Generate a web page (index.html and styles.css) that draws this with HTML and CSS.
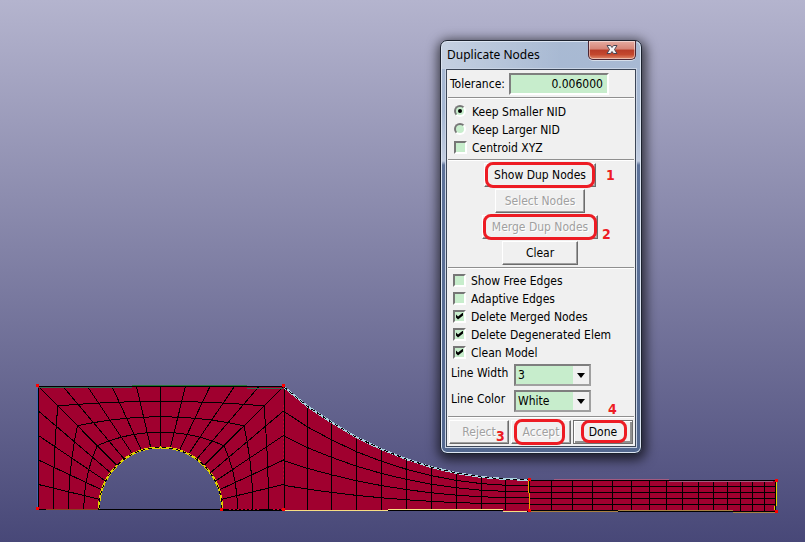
FILE: index.html
```html
<!DOCTYPE html>
<html lang="en">
<head>
<meta charset="utf-8">
<title>Duplicate Nodes</title>
<link rel="stylesheet" href="styles.css">
</head>
<body>
<main class="viewport">
  <svg class="model" width="805" height="542" viewBox="0 0 805 542" aria-hidden="true">
    <path class="solid" d="M38 386H284L307 406L331 422L356 437L381 449L406 459L431 467L456 473L481 477L505 479L529 480H776V511H529L284 510H222V509A61.500 61.500 0 0 0 99 509H38Z"/>
    <path class="mesh" id="mesh"/>
    <path class="edge blue" d="M37.500 389V509M38.500 389V416"/>
    <path class="edge green" d="M39 387.500H132M247 388.500H283"/>
    <path class="edge leaf" d="M132 385.500H247"/>
    <path class="edge black" d="M39 386.500H132M132 386.500H284M38.500 388V508M38 509.500H222M222 510.500H284M284.500 388V510M284 510.500H503M503 511.500H776"/>
    <path class="edge brown" d="M46 509.500H98"/>
    <path class="edge crimson" d="M229 509.500H259M273 509.500H283M283.500 405V480" stroke-dasharray="2 2"/>
    <path class="edge cream" d="M285 510.500H388M388 509.500H503M503 511.500H527"/>
    <path class="edge tan" d="M530 511.500H618M618 510.500H733M733 512.500H775"/>
    <path class="edge black" d="M530 510.500H618M618 511.500H733M733 511.500H775"/>
    <path class="edge mauve" d="M554 479.500H669M669 481.500H773"/>
    <path class="edge black" d="M529 480.500H776M775.500 480V511"/>
    <path class="arc" d="M99 509A61.500 61.500 0 0 1 222 509"/>
    <path class="arc dark" d="M99 509A61.500 61.500 0 0 1 222 509"/>
    <path class="rim" d="M284 387L307 406L331 422L356 437L381 449L406 459L431 467L456 473L481 477L505 479L529 480"/>
    <path class="rim dark" d="M284 387L307 406L331 422L356 437L381 449L406 459L431 467L456 473L481 477L505 479L529 480"/>
    <path class="edge orange" d="M528.500 481V493M529.500 493V510"/>
    <path class="edge yellow" d="M776.500 482V506M774.500 506V510"/>
    <path class="corner" d="M36 384h3v3h-3zM36 507h3v3h-3zM220 508h3v3h-3zM282 384h3v3h-3zM282 508h3v3h-3zM528 478h3v3h-3zM528 509h3v3h-3zM775 479h3v3h-3zM775 510h3v3h-3z"/>
  </svg>

  <form class="dialog" aria-labelledby="dialog-title">
    <header class="titlebar">
      <h1 class="title" id="dialog-title">Duplicate Nodes</h1>
      <button class="close" type="button" aria-label="Close">
        <svg width="14" height="12" viewBox="0 0 14 12"><path d="M2 1.500H5.500L7 3.500L8.500 1.500H12L9.500 5.500L12 9.500H8.500L7 7.500L5.500 9.500H2L4.500 5.500Z" fill="#f4f4f6" stroke="#4a4654"/></svg>
      </button>
    </header>
    <div class="panel">
      <div class="tolerance">
        <label for="tolerance">Tolerance:</label>
        <input class="field" id="tolerance" type="text" value="0.006000">
      </div>
      <div class="group keep">
        <label class="option"><input class="radio" type="radio" name="keep" checked>Keep Smaller NID</label>
        <label class="option"><input class="radio" type="radio" name="keep">Keep Larger NID</label>
        <label class="option"><input class="check" type="checkbox">Centroid XYZ</label>
      </div>
      <div class="group actions">
        <button class="button show marked" type="button">Show Dup Nodes<span class="step step-one">1</span></button>
        <button class="button select-nodes" type="button" disabled>Select Nodes</button>
        <button class="button merge marked" type="button" disabled>Merge Dup Nodes<span class="step step-two">2</span></button>
        <button class="button clear" type="button">Clear</button>
      </div>
      <div class="group settings">
        <label class="option"><input class="check" type="checkbox">Show Free Edges</label>
        <label class="option"><input class="check" type="checkbox">Adaptive Edges</label>
        <label class="option"><input class="check" type="checkbox" checked>Delete Merged Nodes</label>
        <label class="option"><input class="check" type="checkbox" checked>Delete Degenerated Elem</label>
        <label class="option"><input class="check" type="checkbox" checked>Clean Model</label>
        <div class="choices">
          <label for="line-width">Line Width</label>
          <span class="combo"><select id="line-width"><option>3</option></select></span>
          <label for="line-color">Line Color</label>
          <span class="combo"><select id="line-color"><option>White</option></select></span>
        </div>
      </div>
      <footer class="group footer">
        <button class="button" type="button" disabled>Reject</button>
        <button class="button accept marked" type="button" disabled>Accept<span class="step step-three">3</span></button>
        <button class="button done marked" type="button">Done<span class="step step-four">4</span></button>
      </footer>
    </div>
  </form>
</main>
<script src="mesh.js"></script>
</body>
</html>
```
FILE: styles.css
```css
* {
  box-sizing: border-box;
}

body {
  margin: 0;
  font: 12px/18px "DejaVu Sans Condensed", "DejaVu Sans", sans-serif;
  color: #000;
}

.viewport {
  position: relative;
  min-height: 100vh;
  overflow: hidden;
  background: linear-gradient(#b4b4ce, #484878);
}

.model {
  display: block;
  shape-rendering: crispEdges;
}

.solid { fill: #a0002f; }
.mesh { fill: none; stroke: #000; stroke-width: 1; }
.edge { fill: none; stroke-width: 1; }
.black { stroke: #000; }
.blue { stroke: #4267b2; }
.green { stroke: #2e6b4c; }
.leaf { stroke: #217b35; }
.brown { stroke: #894020; }
.crimson { stroke: #d00030; }
.cream { stroke: #f8df83; }
.tan { stroke: #a98042; }
.mauve { stroke: #a35a80; }
.orange { stroke: #f0a000; }
.yellow { stroke: #e0d000; }
.arc { fill: none; stroke: #e0d000; stroke-width: 2; }
.rim { fill: none; stroke: #a9d3df; stroke-width: 2; }
.arc.dark, .rim.dark { stroke: #000; stroke-width: 1; stroke-dasharray: 4 3; }
.corner { fill: #f00; }

.dialog {
  position: absolute;
  left: 440px;
  top: 40px;
  width: 202px;
  padding: 0 5px 6px;
  border: 1px solid #1c222e;
  border-radius: 7px;
  background:
    linear-gradient(90deg, #ffffff55, #ffffff00 60%) top / 100% 28px no-repeat,
    linear-gradient(#a9bad3 0, #a5b7d2 70px, #c2cde0 120px, #5d7299 124px, #53688f 100%);
  box-shadow: inset 0 0 0 1px #dce5f2, 1px 3px 12px 3px #000000aa;
}

.titlebar {
  display: flex;
  justify-content: space-between;
  height: 28px;
}

.title {
  margin: 5px 0 0 1px;
  font: 12px/18px "Noto Sans", sans-serif;
}

.close {
  display: grid;
  place-items: center;
  width: 48px;
  height: 19px;
  padding: 0;
  border: 1px solid #4b2633;
  border-top: 0;
  border-radius: 0 0 5px 5px;
  background: linear-gradient(#e5aca2, #d58476 45%, #b83c28 50%, #c4482e 75%, #e08a6c);
  box-shadow: inset 0 0 0 1px #ffffff77, 0 1px 0 #ffffff88;
}

.panel {
  padding: 1px;
  border: 1px solid #3c4657;
  background: #f0f0f0;
  box-shadow: 0 0 0 1px #c9d4e5;
}

.tolerance {
  display: flex;
  align-items: center;
  gap: 4px;
  height: 26px;
  padding-left: 2px;
}

.field {
  width: 100px;
  height: 22px;
  padding: 0 4px;
  border: 2px solid;
  border-color: #7e7e7e #fff #fff #7e7e7e;
  background: #c7edcc;
  font: inherit;
  text-align: right;
}

.group {
  border-top: 1px solid #8f8f8f;
  box-shadow: inset 0 1px 0 #fff;
}

.keep {
  padding: 5px 0 2px 6px;
}

.option {
  display: flex;
  align-items: center;
  gap: 5px;
}

.radio, .check {
  appearance: none;
  display: grid;
  place-items: center;
  flex: none;
  width: 13px;
  height: 13px;
  margin: 0 0 2px;
  border: 2px solid;
  border-color: #767676 #fff #fff #767676;
  background: #c7edcc;
}

.radio {
  width: 12px;
  height: 12px;
  margin: 0 1px 3px 0;
  border-radius: 50%;
}

.radio:checked::before {
  content: "";
  width: 4px;
  height: 4px;
  border-radius: 50%;
  background: #000;
}

.check:checked::before {
  content: "";
  width: 7px;
  height: 7px;
  background: #000;
  clip-path: polygon(0 2px, 2px 4px, 7px 0, 7px 3px, 2px 7px, 0 5px);
}

.actions {
  display: flex;
  flex-direction: column;
  align-items: center;
  gap: 2px;
  padding: 3px 2px 2px 0;
}

.button {
  position: relative;
  height: 24px;
  padding: 0;
  border: 1px solid;
  border-color: #fff #6c6c6c #6c6c6c #fff;
  background: #f0f0f0;
  box-shadow: inset -1px -1px 0 #a0a0a0;
  color: #000;
  font: inherit;
}

.button:disabled {
  color: #a0a0a0;
  text-shadow: 1px 1px 0 #fff;
}

.show { width: 112px; }
.select-nodes { width: 90px; }
.merge { width: 116px; }
.clear { width: 76px; }

.marked::after {
  content: "";
  position: absolute;
  inset: -2px 0;
  border: 3px solid #ed1c24;
  border-radius: 8px;
}

.step {
  position: absolute;
  color: #ed1c24;
  font: bold 14px/16px "DejaVu Sans Condensed", "DejaVu Sans", sans-serif;
  text-shadow: none;
}

.step-one { left: 121px; top: 3px; }
.step-two { left: 119px; top: 10px; }
.step-three { left: -16px; top: 7px; }
.step-four { left: 34px; top: -20px; }

.settings {
  padding: 4px 0 4px 5px;
}

.choices {
  display: grid;
  grid-template-columns: 61px 77px;
  gap: 4px 2px;
  padding-top: 2px;
  margin-left: -2px;
}

.combo {
  display: block;
  position: relative;
  height: 22px;
}

.combo select {
  appearance: none;
  width: 100%;
  height: 100%;
  padding: 0 2px;
  border: 2px solid;
  border-color: #7e7e7e #a0a0a0 #a0a0a0 #7e7e7e;
  border-radius: 0;
  background: linear-gradient(#f0f0f0, #f0f0f0) right / 16px 100% no-repeat #c7edcc;
  color: #000;
  font: inherit;
}

.combo::after {
  content: "";
  position: absolute;
  right: 6px;
  top: 9px;
  border: solid transparent;
  border-width: 5px 4px 0;
  border-top-color: #000;
  pointer-events: none;
}

.footer {
  display: grid;
  grid-template-columns: 60px 60px 1fr;
  gap: 2px;
  padding: 3px 1px 1px;
}

.done {
  border-color: #707070;
  box-shadow: inset 1px 1px 0 #fff, inset -2px -2px 0 #909090;
}

.accept::after { inset: -2px 5px -2px 2px; }
.done::after { inset: -1px 5px 0 7px; }
```
FILE: mesh.js
```js
const parts = [];
const mix = (a, b, t) => [a[0] + (b[0] - a[0]) * t, a[1] + (b[1] - a[1]) * t];

// Draws the grid lines between two matching chains of nodes.
function grid(from, to, rows) {
  from.forEach((p, i) => parts.push("M" + p + "L" + to[i]));
  for (let r = 1; r < rows; r++) {
    parts.push("M" + from.map((p, i) => mix(p, to[i], r / rows)).join("L"));
  }
}

// Plate with the hole: outer rectangle to half circle.
const outer = [];
const hole = [];
for (let i = 0; i <= 20; i++) {
  const angle = Math.PI * i / 20;
  hole.push([160.5 - 61.5 * Math.cos(angle), 509 - 61.5 * Math.sin(angle)]);
  if (i <= 5) outer.push([38, 509 - 24.6 * i]);
  else if (i < 15) outer.push([38 + 24.6 * (i - 5), 386]);
  else outer.push([284, 386 + 24.6 * (i - 15)]);
}
grid(outer, hole, 4);

// Tapering fillet.
const fillet = [[284, 387], [307, 406], [331, 422], [356, 437], [381, 449],
  [406, 459], [431, 467], [456, 473], [481, 477], [505, 479], [529, 480]];
grid(fillet, fillet.map(p => [p[0] + 1, 510]), 5);

// Narrow strip.
const strip = [529, 551, 572, 592, 612, 631, 649, 666, 682, 698, 713, 727, 740, 752, 764, 775]
  .map(x => [x + 0.5, 480.5]);
grid(strip, strip.map(p => [p[0], 510.5]), 5);

document.getElementById("mesh").setAttribute("d", parts.join(""));
```
